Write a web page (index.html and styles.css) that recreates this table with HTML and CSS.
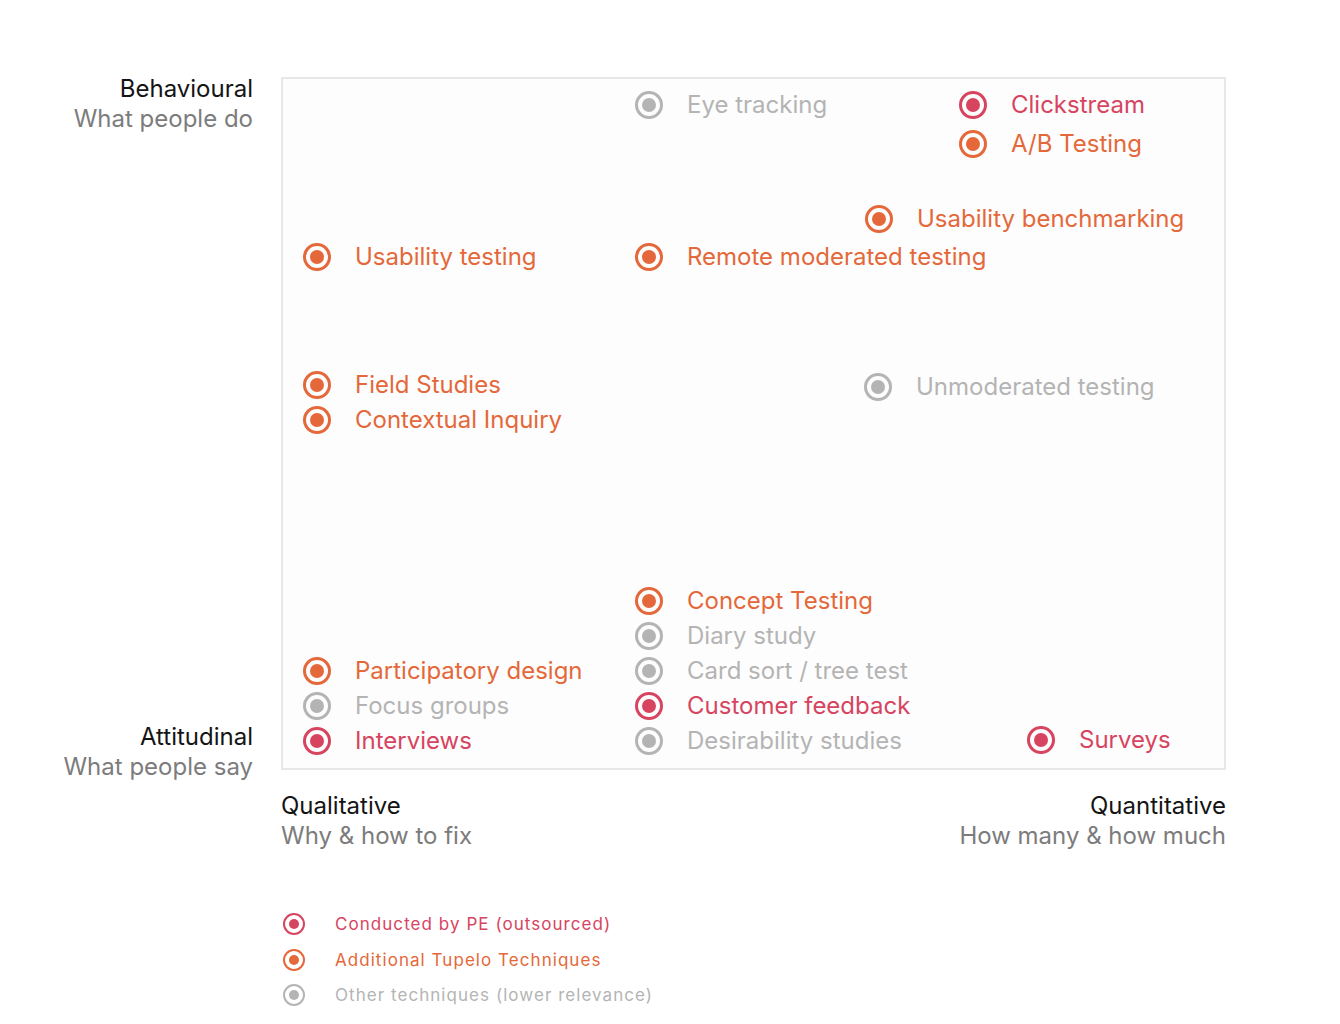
FILE: index.html
```html
<!DOCTYPE html>
<html lang="en">
<head>
<meta charset="utf-8">
<title>Research methods landscape</title>
<link rel="stylesheet" href="styles.css">
</head>
<body>
<div class="page">
  <div class="matrix">
    <div class="ylabels">
      <div class="axis-label">
        <div class="axis-title">Behavioural</div>
        <div class="axis-sub">What people do</div>
      </div>
      <div class="axis-label">
        <div class="axis-title">Attitudinal</div>
        <div class="axis-sub">What people say</div>
      </div>
    </div>
    <div class="chart">
      <ul class="group" style="left:352px;top:8px">
        <li class="item gray"><span class="dot"></span>Eye tracking</li>
      </ul>
      <ul class="group loose" style="left:676px;top:6px">
        <li class="item red"><span class="dot"></span>Clickstream</li>
        <li class="item orange"><span class="dot"></span>A/B Testing</li>
      </ul>
      <ul class="group" style="left:582px;top:122px">
        <li class="item orange"><span class="dot"></span>Usability benchmarking</li>
      </ul>
      <ul class="group" style="left:20px;top:160px">
        <li class="item orange"><span class="dot"></span>Usability testing</li>
      </ul>
      <ul class="group" style="left:352px;top:160px">
        <li class="item orange"><span class="dot"></span>Remote moderated testing</li>
      </ul>
      <ul class="group" style="left:20px;top:288px">
        <li class="item orange"><span class="dot"></span>Field Studies</li>
        <li class="item orange"><span class="dot"></span>Contextual Inquiry</li>
      </ul>
      <ul class="group" style="left:581px;top:290px">
        <li class="item gray"><span class="dot"></span>Unmoderated testing</li>
      </ul>
      <ul class="group" style="left:352px;top:504px">
        <li class="item orange"><span class="dot"></span>Concept Testing</li>
        <li class="item gray"><span class="dot"></span>Diary study</li>
        <li class="item gray"><span class="dot"></span>Card sort / tree test</li>
        <li class="item red"><span class="dot"></span>Customer feedback</li>
        <li class="item gray"><span class="dot"></span>Desirability studies</li>
      </ul>
      <ul class="group" style="left:20px;top:574px">
        <li class="item orange"><span class="dot"></span>Participatory design</li>
        <li class="item gray"><span class="dot"></span>Focus groups</li>
        <li class="item red"><span class="dot"></span>Interviews</li>
      </ul>
      <ul class="group" style="left:744px;top:643px">
        <li class="item red"><span class="dot"></span>Surveys</li>
      </ul>
    </div>
    <div></div>
    <div class="xlabels">
      <div class="axis-label left">
        <div class="axis-title">Qualitative</div>
        <div class="axis-sub">Why &amp; how to fix</div>
      </div>
      <div class="axis-label">
        <div class="axis-title">Quantitative</div>
        <div class="axis-sub">How many &amp; how much</div>
      </div>
    </div>
  </div>
  <ul class="legend">
    <li class="legend-item red"><span class="dot small"></span>Conducted by PE (outsourced)</li>
    <li class="legend-item orange"><span class="dot small"></span>Additional Tupelo Techniques</li>
    <li class="legend-item gray"><span class="dot small"></span>Other techniques (lower relevance)</li>
  </ul>
</div>
</body>
</html>
```

FILE: styles.css
```css
* { box-sizing: border-box; }

html, body {
  margin: 0;
  padding: 0;
  background: #ffffff;
}

body {
  font-family: Inter, "Noto Sans", "Liberation Sans", sans-serif;
  color: #1a1a1a;
}

.page {
  padding: 77px 0 0 0;
}

.matrix {
  display: grid;
  grid-template-columns: 253px 945px;
  column-gap: 28px;
  row-gap: 21px;
}

.ylabels {
  display: flex;
  flex-direction: column;
  justify-content: space-between;
  text-align: right;
  margin-top: -3px;
  margin-bottom: -12px;
}

.axis-label {
  font-size: 24px;
  line-height: 30px;
  text-align: right;
}

.axis-label.left { text-align: left; }

.axis-title { color: #141414; }
.axis-sub { color: #7c7c7c; }

.chart {
  position: relative;
  height: 693px;
  border: 2px solid #e7e7e7;
  background: #fdfdfd;
}

.group {
  position: absolute;
  list-style: none;
  margin: 0;
  padding: 0;
}

.item {
  display: flex;
  align-items: center;
  height: 35px;
  font-size: 24px;
  white-space: nowrap;
}

.group.loose .item { height: 39px; }

.dot {
  position: relative;
  flex: none;
  width: 28px;
  height: 28px;
  border: 3px solid currentColor;
  border-radius: 50%;
  margin-right: 24px;
}

.dot::after {
  content: "";
  position: absolute;
  left: 4px;
  top: 4px;
  width: 14px;
  height: 14px;
  border-radius: 50%;
  background: currentColor;
}

.orange { color: #e4683a; }
.red { color: #d7445f; }
.gray { color: #b4b4b4; }

.xlabels {
  display: flex;
  justify-content: space-between;
}

.legend {
  list-style: none;
  margin: 62px 0 0 283px;
  padding: 0;
  display: flex;
  flex-direction: column;
  gap: 13.5px;
}

.legend-item {
  display: flex;
  align-items: center;
  height: 22px;
  font-size: 17px;
  letter-spacing: 1.05px;
  white-space: nowrap;
}

.dot.small {
  width: 22px;
  height: 22px;
  border-width: 2px;
  margin-right: 30px;
}

.dot.small::after {
  left: 4px;
  top: 4px;
  width: 10px;
  height: 10px;
}
```
